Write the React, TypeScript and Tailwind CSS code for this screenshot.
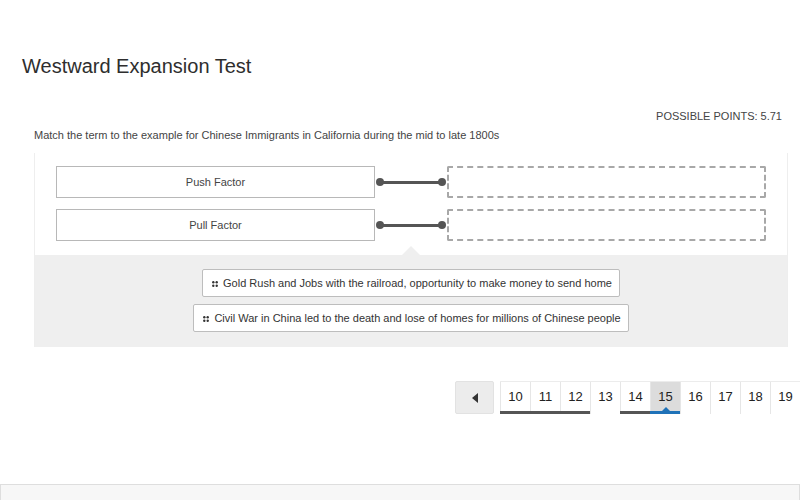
import React from 'react';

// Ô kéo thả: thuật ngữ bên trái, vùng thả bên phải
const terms = ['Push Factor', 'Pull Factor'];

const answers = [
  'Gold Rush and Jobs with the railroad, opportunity to make money to send home',
  'Civil War in China led to the death and lose of homes for millions of Chinese people',
];

// trạng thái câu hỏi trong thanh phân trang
const pages: { n: number; state: 'done' | 'current' | 'none' }[] = [
  { n: 10, state: 'done' },
  { n: 11, state: 'done' },
  { n: 12, state: 'done' },
  { n: 13, state: 'none' },
  { n: 14, state: 'done' },
  { n: 15, state: 'current' },
  { n: 16, state: 'none' },
  { n: 17, state: 'none' },
  { n: 18, state: 'none' },
  { n: 19, state: 'none' },
];

const DragHandle = () => (
  <svg width="6" height="6" viewBox="0 0 6 6" className="shrink-0 mt-[2px]">
    <circle cx="1.3" cy="1.3" r="1.2" fill="#333" />
    <circle cx="4.7" cy="1.3" r="1.2" fill="#333" />
    <circle cx="1.3" cy="4.7" r="1.2" fill="#333" />
    <circle cx="4.7" cy="4.7" r="1.2" fill="#333" />
  </svg>
);

const Connector = () => (
  <div className="flex items-center px-[1px]">
    <div className="w-[8px] h-[8px] rounded-full bg-[#555]" />
    <div className="flex-1 h-[3px] bg-[#555] -mx-[1px]" />
    <div className="w-[8px] h-[8px] rounded-full bg-[#555]" />
  </div>
);

const App: React.FC = () => {
  return (
    <div className="w-[800px] h-[500px] bg-white overflow-hidden flex flex-col font-['Liberation_Sans',Arial,sans-serif] text-[#333]">
      <h1 className="ml-[22px] mt-[54px] text-[20px] leading-[24px] text-[#2e2e2e]">Westward Expansion Test</h1>

      <div className="pl-[34px] pr-[12px]">
        <div className="mt-[30px] pr-[6px] text-right text-[11px] leading-4 text-[#444]">POSSIBLE POINTS: 5.71</div>
        <p className="mt-[3px] text-[11px] leading-4 text-[#444]">
          Match the term to the example for Chinese Immigrants in California during the mid to late 1800s
        </p>

        {/* khung câu hỏi */}
        <div className="mt-[10px] border-x border-[#eeeeee]">
          <div className="relative px-[21px] pt-[13px] pb-[14px] flex flex-col gap-[11px]">
            {terms.map((t) => (
              <div key={t} className="grid grid-cols-[319px_72px_319px] h-[32px]">
                <div className="border border-[#b8b8b8] flex items-center justify-center text-[11px] text-[#444]">{t}</div>
                <Connector />
                <div className="border-2 border-dashed border-[#a8a8a8] rounded-[2px]" />
              </div>
            ))}
            <div className="absolute left-[367px] bottom-0 w-0 h-0 border-x-[9px] border-x-transparent border-b-[9px] border-b-[#efefef]" />
          </div>

          <div className="bg-[#efefef] pt-[14px] pb-[15px] flex flex-col items-center gap-[7px]">
            {answers.map((a) => (
              <div key={a} className="h-[28px] flex items-center gap-[5px] pl-[9px] pr-[7px] bg-white border border-[#bdbdbd] rounded-[2px] text-[11px] text-[#333]">
                <DragHandle />
                <span>{a}</span>
              </div>
            ))}
          </div>
        </div>
      </div>

      {/* phân trang */}
      <div className="mt-[34px] flex justify-end items-start">
        <div className="w-[39px] h-[33px] bg-[#ececec] border border-[#e2e2e2] rounded-[2px] flex items-center justify-center">
          <div className="w-0 h-0 border-y-[5px] border-y-transparent border-r-[6px] border-r-[#333]" />
        </div>
        <div className="ml-[6px] flex shrink-0 border-t border-[#ececec]">
          {pages.map((p) => (
            <div
              key={p.n}
              className={
                'relative w-[30px] h-[32px] pb-[3px] border-l border-[#e6e6e6] flex items-center justify-center text-[13px] text-[#222] ' +
                (p.state === 'current' ? 'bg-[#dcdcdc]' : '')
              }
            >
              {p.n}
              {p.state === 'done' && <div className="absolute -left-[1px] right-0 bottom-0 h-[3px] bg-[#555]" />}
              {p.state === 'current' && (
                <>
                  <div className="absolute -left-[1px] right-0 bottom-0 h-[3px] bg-[#1f72b8]" />
                  <div className="absolute left-[11px] bottom-[3px] w-0 h-0 border-x-[4px] border-x-transparent border-b-[4px] border-b-[#1f72b8]" />
                </>
              )}
            </div>
          ))}
        </div>
      </div>

      <div className="mt-auto h-[16px] bg-[#f7f7f7] border-t border-x border-[#dedede]" />
    </div>
  );
};

export default App;
